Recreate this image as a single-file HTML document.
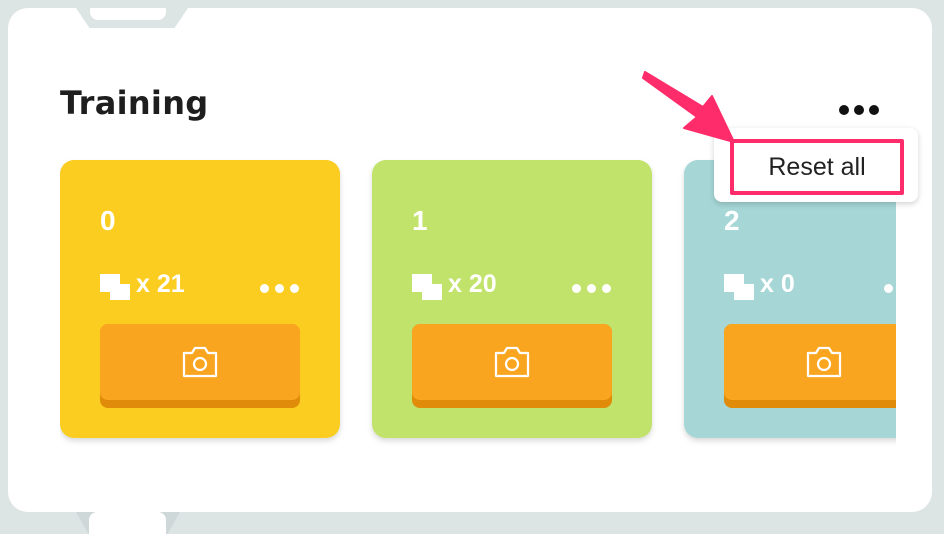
<!DOCTYPE html>
<html><head><style>
*{margin:0;padding:0;box-sizing:border-box}
body{width:944px;height:534px;overflow:hidden;background:#dce4e4;position:relative;font-family:"DejaVu Sans","Liberation Sans",sans-serif}
.main{position:absolute;left:8px;top:8px;width:924px;height:504px;background:#fff;border-radius:20px;overflow:hidden}
.notch{position:absolute;left:68px;top:0;width:112px;height:20px;background:#dce4e4;clip-path:polygon(0 0,100% 0,88% 100%,12% 100%)}
.tab{position:absolute;background:#fff;border-radius:0 0 8px 8px}
h1{position:absolute;font-size:32px;font-weight:bold;color:#1e1e1e;letter-spacing:0.3px}
.card{position:absolute;top:160px;width:280px;height:278px;border-radius:14px;box-shadow:0 3px 6px rgba(0,0,0,.15);color:#fff;font-family:"Liberation Sans",sans-serif;font-weight:bold}
.num{position:absolute;left:40px;top:45px;font-size:28px}
.ic{position:absolute;left:40px;top:114px;width:30px;height:26px}
.ic:before{content:"";position:absolute;left:0;top:0;width:20px;height:18px;background:#fff}
.ic:after{content:"";position:absolute;left:10px;top:10px;width:20px;height:16px;background:#fff}
.cnt{position:absolute;left:76px;top:110px;font-size:25px}
.dots{position:absolute;left:200px;top:120px;}
.dots i{display:inline-block;width:9px;height:9px;border-radius:50%;background:#fff;margin-right:6px}
.btn{position:absolute;left:40px;top:164px;width:200px;height:84px;background:#e08c0a;border-radius:8px}
.btn div{height:76px;background:#f9a51f;border-radius:8px;display:flex;align-items:center;justify-content:center}
</style></head><body>
<div style="position:absolute;left:76px;top:512px;width:104px;height:22px;background:#cfd8d8;clip-path:polygon(0 0,100% 0,88% 100%,12% 100%)"></div>
<div class="tab" style="left:89px;top:512px;width:77px;height:22px;border-radius:8px 8px 0 0"></div>
<div class="main">
<div class="notch"></div>
<div class="tab" style="left:82px;top:-8px;width:76px;height:20px"></div>
<h1 style="left:52px;top:76px">Training</h1>
<div style="position:absolute;left:831px;top:92px"><span style="display:inline-block;width:10px;height:10px;border-radius:50%;background:#111;margin-right:5px"></span><span style="display:inline-block;width:10px;height:10px;border-radius:50%;background:#111;margin-right:5px"></span><span style="display:inline-block;width:10px;height:10px;border-radius:50%;background:#111"></span></div>
</div>
<div style="position:absolute;left:60px;top:0;width:836px;height:534px;overflow:hidden">
<div class="card" style="left:0;background:#fbcd21"><div class="num">0</div><div class="ic"></div><div class="cnt">x 21</div><div class="dots"><i></i><i></i><i></i></div><div class="btn"><div><svg width="38" height="36" viewBox="0 0 38 36" fill="none" stroke="#fff" stroke-width="2.2"><path d="M3 9h8l3-5h10l3 5h8v23H3z" stroke-linejoin="round"/><circle cx="19" cy="20" r="6"/></svg></div></div></div>
<div class="card" style="left:312px;background:#c1e36b"><div class="num">1</div><div class="ic"></div><div class="cnt">x 20</div><div class="dots"><i></i><i></i><i></i></div><div class="btn"><div><svg width="38" height="36" viewBox="0 0 38 36" fill="none" stroke="#fff" stroke-width="2.2"><path d="M3 9h8l3-5h10l3 5h8v23H3z" stroke-linejoin="round"/><circle cx="19" cy="20" r="6"/></svg></div></div></div>
<div class="card" style="left:624px;background:#a6d6d6"><div class="num">2</div><div class="ic"></div><div class="cnt">x 0</div><div class="dots"><i></i><i></i><i></i></div><div class="btn"><div><svg width="38" height="36" viewBox="0 0 38 36" fill="none" stroke="#fff" stroke-width="2.2"><path d="M3 9h8l3-5h10l3 5h8v23H3z" stroke-linejoin="round"/><circle cx="19" cy="20" r="6"/></svg></div></div></div>
</div>
<div style="position:absolute;left:714px;top:128px;width:204px;height:74px;background:#fff;border-radius:8px;box-shadow:0 2px 6px rgba(0,0,0,.18)"></div>
<div style="position:absolute;left:730px;top:139px;width:174px;height:56px;border:4px solid #fe2c6a;border-radius:2px;display:flex;align-items:center;justify-content:center;font-size:25px;color:#222;font-family:'Liberation Sans',sans-serif">Reset all</div>
<svg style="position:absolute;left:0;top:0" width="944" height="534"><path d="M645 72 L703 107 L712 96 L734 142 L684 128 L697 117 L643 78 Z" fill="#fe2c6a" stroke="#fe2c6a" stroke-width="2" stroke-linejoin="round"/></svg>
</body></html>
